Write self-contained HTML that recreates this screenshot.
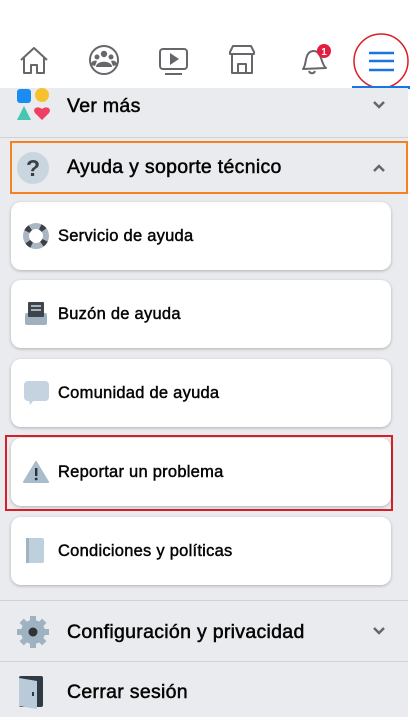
<!DOCTYPE html>
<html><head><meta charset="utf-8"><style>
*{margin:0;padding:0;box-sizing:border-box}
body{width:416px;height:720px;background:#fff;font-family:"Liberation Sans",sans-serif;position:relative;overflow:hidden;color:#050505}
.panel{position:absolute;left:0;top:88px;width:408px;height:629px;background:#e9ebee}
.row{position:absolute;left:0;width:408px;font-size:19.5px;letter-spacing:0.3px;font-weight:normal;-webkit-text-stroke:0.5px #050505}
.row span{position:absolute;left:67px}
.div{position:absolute;left:0;width:408px;height:1px;background:#cfd1d5}
.card{position:absolute;left:11px;width:380px;height:68px;background:#fff;border-radius:10px;box-shadow:0 1px 3px rgba(0,0,0,.25)}
.card span{position:absolute;left:47px;top:25px;font-size:16.5px;letter-spacing:0.25px;font-weight:normal;-webkit-text-stroke:0.45px #050505}
.card svg{position:absolute;left:12px;top:21px}
</style></head><body>
<svg style="position:absolute;left:0;top:30px" width="416" height="60">
<g transform="translate(0,10)">
 <g fill="none" stroke="#65676b" stroke-width="2" stroke-linejoin="round">
  <path d="M21 20 L34 8 L47 20 M24 18 V33 H31 V25 H37 V33 H44 V18"/>
  <circle cx="104" cy="20" r="14"/>
  <rect x="160" y="9" width="27" height="20" rx="3"/><path d="M165 34 H182"/>
  <path d="M230 12 L233 6 H251 L254 12 V14 H230 Z M232 14 V33 H252 V14 M238 33 V24 H246 V33"/>
  <path d="M303 29 C307 25 304 12 313 11 C322 10 321 25 326 28 Z M309 31 C310 34 314 34 315 31"/>
 </g>
 <g fill="#65676b"><circle cx="104" cy="14" r="3.2"/><circle cx="97" cy="17" r="2.5"/><circle cx="111" cy="17" r="2.5"/><path d="M96 27 C96 20 112 20 112 27 Z M91 25 C91 21 95 20 97 21 L95 26Z M117 25 C117 21 113 20 111 21 L113 26Z"/>
 <path d="M170 13 V25 L179 19 Z"/></g>
 <circle cx="324" cy="11" r="7" fill="#e41e3f"/><text x="324" y="15" fill="#fff" font-size="10" font-weight="bold" text-anchor="middle" font-family="Liberation Sans">1</text>
 <g stroke="#1b74e4" stroke-width="2.4"><path d="M369 13 H394 M369 21 H394 M369 30 H394"/></g>
 <ellipse cx="381" cy="21" rx="27" ry="27" fill="none" stroke="#d81f26" stroke-width="1.5"/>
</g>
 <rect x="352" y="56" width="58" height="3" fill="#1b74e4"/>
</svg>
<div class="panel"></div>
<div class="row" style="top:95px;height:24px"><span>Ver más</span></div>
<svg style="position:absolute;left:16px;top:88px" width="34" height="34">
 <rect x="1" y="1" width="14" height="14" rx="3" fill="#1b8cf2"/><circle cx="26" cy="7" r="7" fill="#f7c12c"/>
 <path d="M8 18 L15 32 H1 Z" fill="#46c6b0"/><path d="M26 32 L19 25 C16 21 21 17 26 21 C31 17 36 21 33 25Z" fill="#ef3f63"/>
</svg>
<svg style="position:absolute;left:372px;top:100px" width="14" height="10"><path d="M2 2 L7 7 L12 2" stroke="#65676b" stroke-width="2.5" fill="none"/></svg>
<div class="div" style="top:137px"></div>
<div style="position:absolute;left:10px;top:141px;width:398px;height:53px;border:2px solid #f58220"></div>
<div class="row" style="top:156px"><span>Ayuda y soporte técnico</span></div>
<svg style="position:absolute;left:16px;top:151px" width="34" height="34"><circle cx="17" cy="17" r="16" fill="#c9d6e0"/><text x="17" y="25" text-anchor="middle" font-size="23" font-weight="bold" fill="#3a3f45" font-family="Liberation Sans">?</text></svg>
<svg style="position:absolute;left:372px;top:163px" width="14" height="10"><path d="M2 8 L7 3 L12 8" stroke="#65676b" stroke-width="2.5" fill="none"/></svg>
<div class="card" style="top:202px"><svg width="26" height="26"><circle cx="13" cy="13" r="10" fill="none" stroke="#aab7c2" stroke-width="6"/><g stroke="#3d4147" stroke-width="6" fill="none" stroke-dasharray="5 10.7"><circle cx="13" cy="13" r="10" transform="rotate(-65 13 13)"/></g></svg><span>Servicio de ayuda</span></div>
<div class="card" style="top:280px"><svg width="26" height="26"><rect x="2" y="12" width="22" height="12" rx="2" fill="#9fb0bf"/><rect x="5" y="1" width="16" height="15" rx="1" fill="#3e444b"/><path d="M8 5 H18 M8 9 H18" stroke="#cfd8df" stroke-width="1.5"/></svg><span>Buzón de ayuda</span></div>
<div class="card" style="top:359px"><svg width="26" height="26"><rect x="1" y="1" width="25" height="20" rx="4" fill="#c4d3df"/><path d="M6 20 L7 25 L11 20Z" fill="#c4d3df"/></svg><span>Comunidad de ayuda</span></div>
<div style="position:absolute;left:5px;top:435px;width:388px;height:76px;border:2px solid #d81f26"></div>
<div class="card" style="top:438px"><svg width="26" height="26"><path d="M13 3 L25 23 H1 Z" fill="#a9bccb" stroke="#a9bccb" stroke-linejoin="round" stroke-width="2"/><rect x="12" y="9" width="2.4" height="8" fill="#2f3338"/><circle cx="13.2" cy="20" r="1.4" fill="#2f3338"/></svg><span>Reportar un problema</span></div>
<div class="card" style="top:517px"><svg width="26" height="26"><rect x="3" y="0" width="18" height="25" rx="2" fill="#bfd0dd"/><rect x="3" y="0" width="3" height="25" fill="#9fb3c2"/></svg><span>Condiciones y políticas</span></div>
<div class="div" style="top:600px"></div>
<div class="row" style="top:621px"><span>Configuración y privacidad</span></div>
<svg style="position:absolute;left:15px;top:614px" width="36" height="36"><g fill="#9fb2c2"><circle cx="18" cy="18" r="12"/><g stroke="#9fb2c2" stroke-width="6"><path d="M18 2 V34 M2 18 H34 M6.7 6.7 L29.3 29.3 M29.3 6.7 L6.7 29.3"/></g></g><circle cx="18" cy="18" r="4.5" fill="#2f3338"/></svg>
<svg style="position:absolute;left:372px;top:626px" width="14" height="10"><path d="M2 2 L7 7 L12 2" stroke="#65676b" stroke-width="2.5" fill="none"/></svg>
<div class="div" style="top:661px"></div>
<div class="row" style="top:681px"><span>Cerrar sesión</span></div>
<svg style="position:absolute;left:17px;top:676px" width="28" height="34"><rect x="2" y="0" width="24" height="31" rx="2" fill="#2f3a44"/><path d="M2 2 L20 5 V33 L2 30Z" fill="#b9cbd8"/><rect x="15" y="16" width="2" height="4" fill="#2f3a44"/></svg>
</body></html>
